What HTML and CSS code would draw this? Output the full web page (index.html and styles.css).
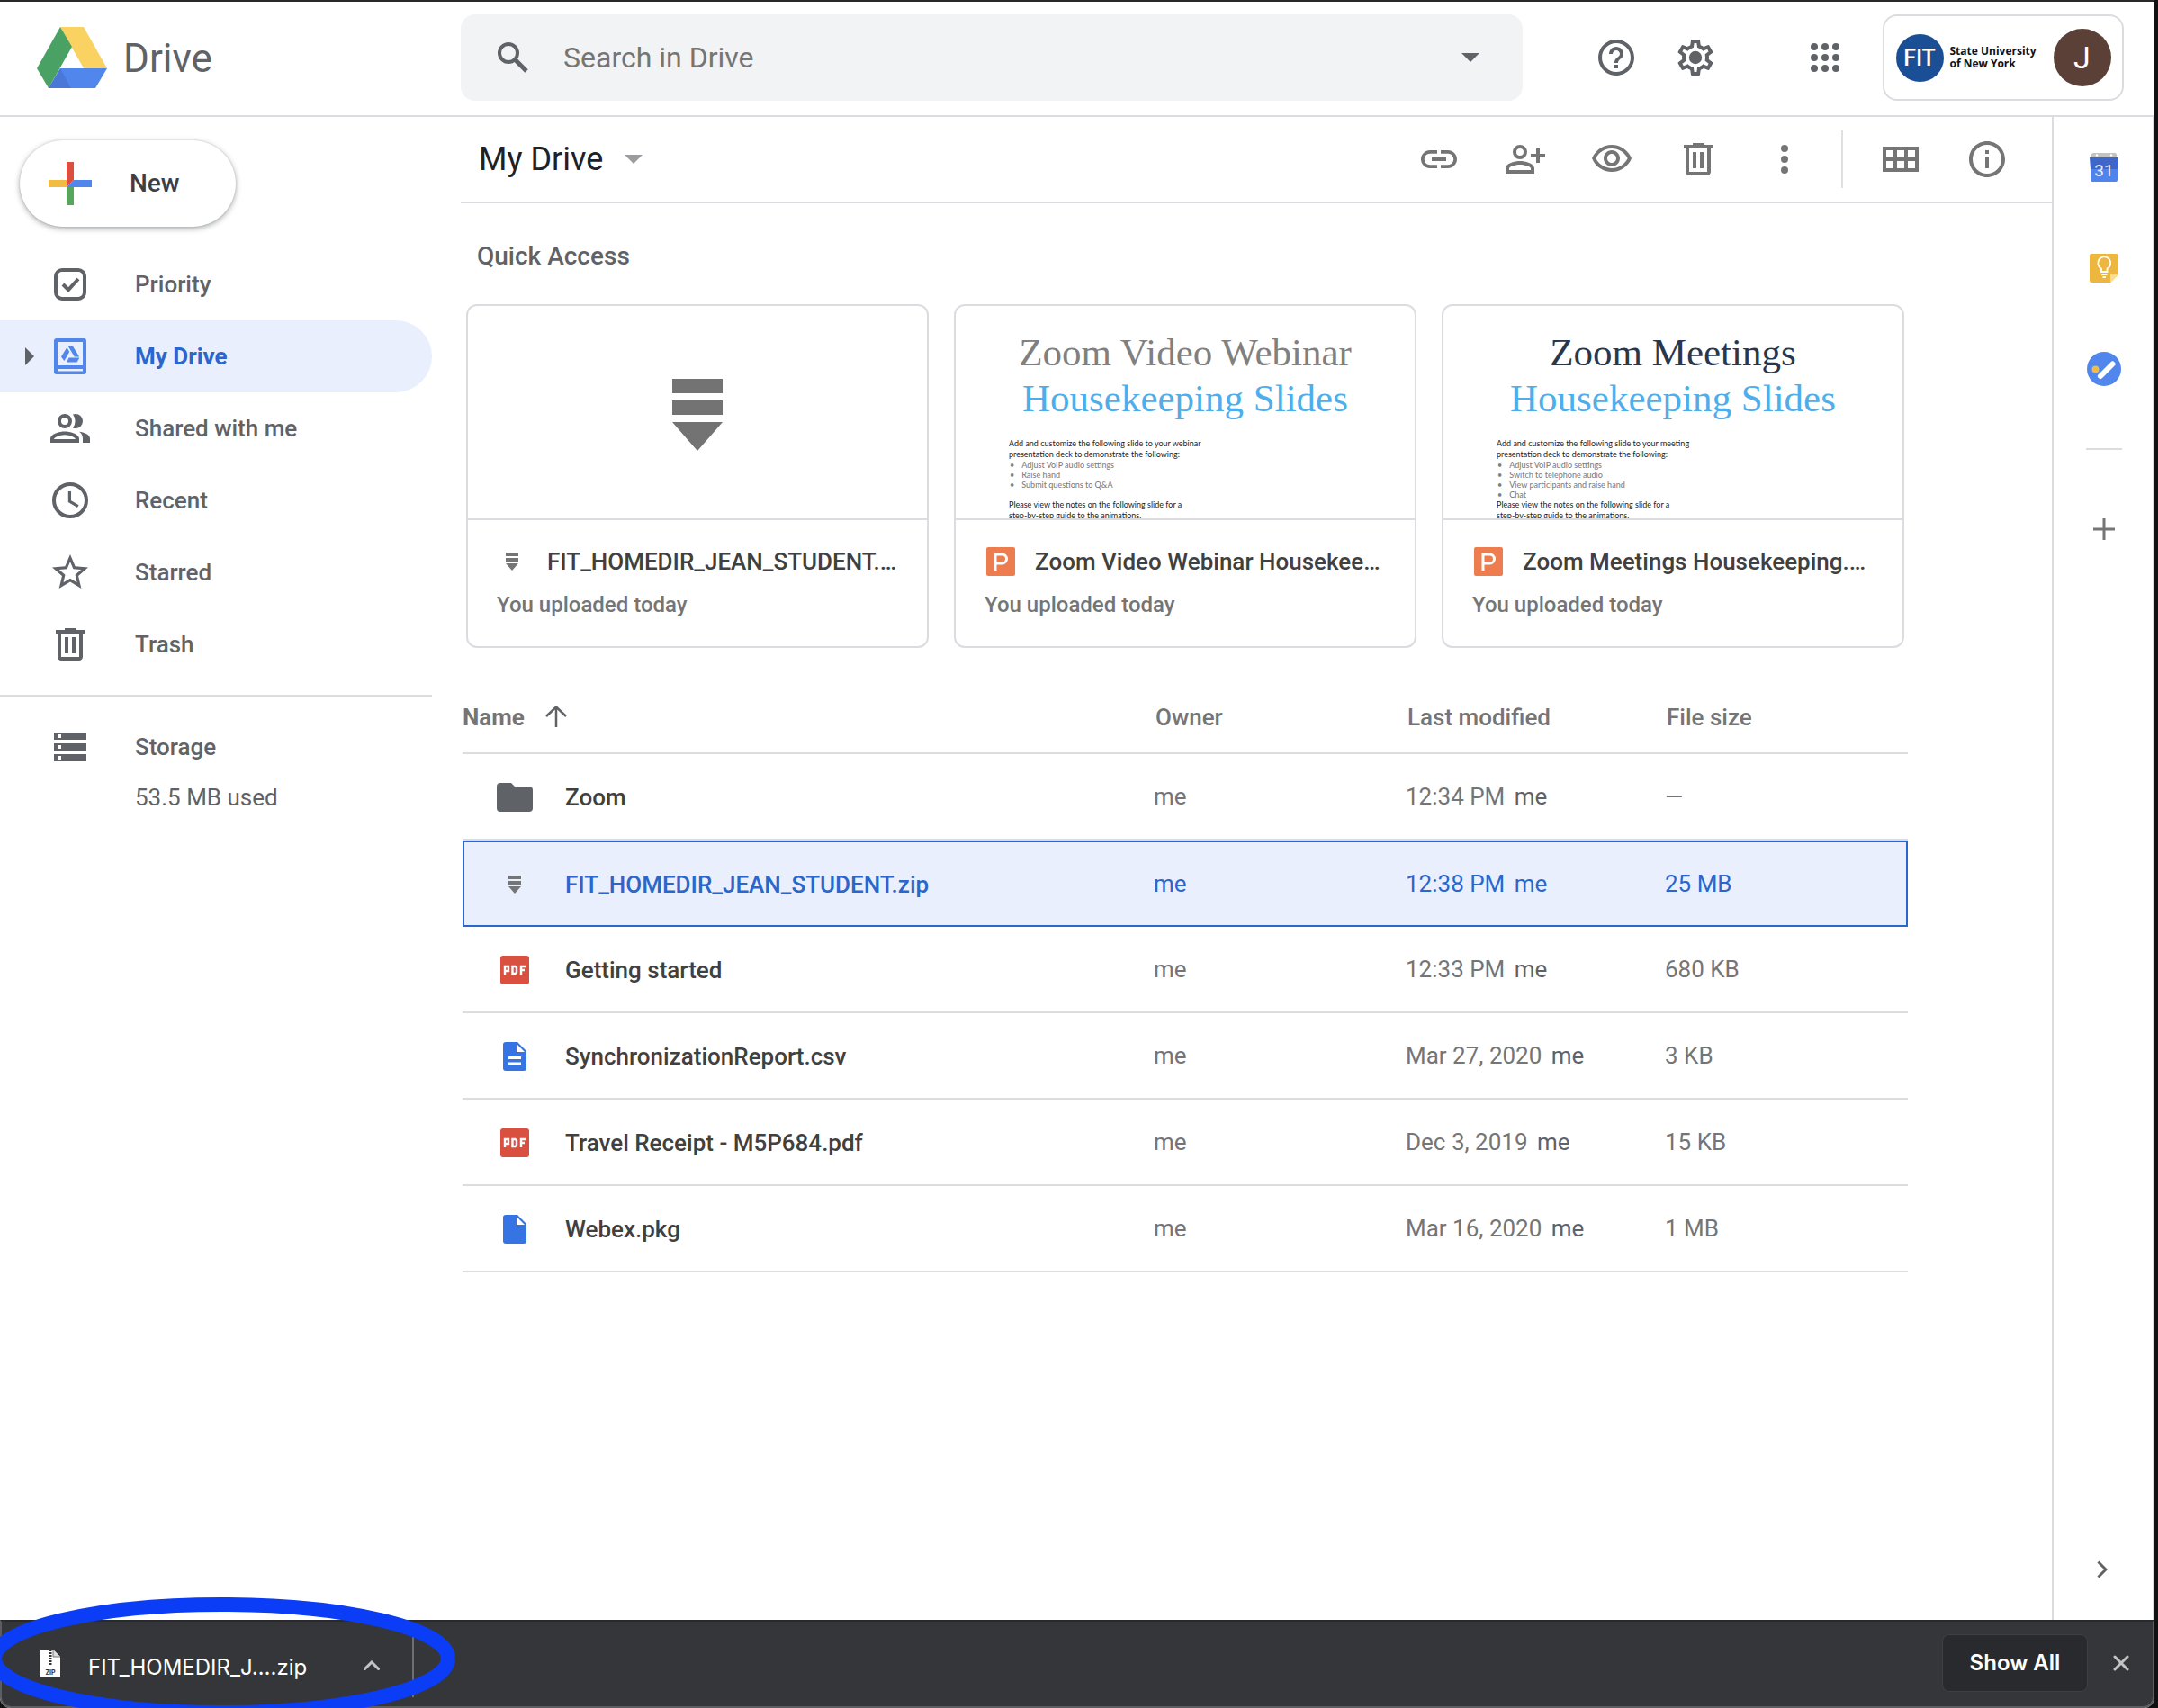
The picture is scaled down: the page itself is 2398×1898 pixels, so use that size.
FILE: index.html
```html
<!DOCTYPE html>
<html lang="en">
<head>
<meta charset="utf-8">
<title>My Drive - Google Drive</title>
<link rel="stylesheet" href="styles.css">
</head>
<body>
<svg class="sprite" aria-hidden="true">
  <symbol id="trash" viewBox="0 0 24 24"><path fill-rule="evenodd" d="M15 4V3H9v1H4v2h1v13c0 1.100.9 2 2 2h10c1.100 0 2-.9 2-2V6h1V4h-5zm2 15H7V6h10v13zM9 8h2v9H9zM13 8h2v9h-2z"/></symbol>
  <symbol id="zip" viewBox="0 0 14 20"><path d="M0 0h14v4H0zM0 6h14v4H0zM0 12h14l-7 8z"/></symbol>
  <symbol id="slides" viewBox="0 0 32 32"><rect width="32" height="32" rx="2" fill="#ed7d4e"/><path d="M10 26V8h7.500a5 5 0 0 1 0 10H10" fill="none" stroke="#fff" stroke-width="3"/></symbol>
  <symbol id="pdf" viewBox="0 0 32 32"><rect width="32" height="32" rx="3" fill="#d94f40"/><path d="M5 21v-9h4v5H5M13.500 12h3l1.500 1.500v5L16.500 20h-3zM23 21v-9h5M23 16h4" fill="none" stroke="#fff" stroke-width="2.400"/></symbol>
  <symbol id="doc" viewBox="0 0 26 32"><path d="M3 0h13l10 10v19a3 3 0 0 1-3 3H3a3 3 0 0 1-3-3V3a3 3 0 0 1 3-3z" fill="#3574e2"/><path d="M15 2v9h9z" fill="#fff"/></symbol>
</svg>
<div class="window">
  <header class="topbar">
    <a class="brand" href="#">
      <svg class="logo" viewBox="0 0 78 68" aria-hidden="true">
        <path d="M26 0h26l26 46H52z" fill="#f9d262"/>
        <path d="M26 0l13 22L13 68 0 46z" fill="#4aa164"/>
        <path d="M26 46h52L65 68H13z" fill="#5186ec"/>
        <path d="M26 46l12 22H13z" fill="#4a78d8"/>
      </svg>
      <span>Drive</span>
    </a>
    <form class="search">
      <svg class="glass" viewBox="0 0 36 36" aria-hidden="true"><circle cx="13" cy="13" r="10" fill="none" stroke="currentColor" stroke-width="4"/><path d="M20 20l13 13" stroke="currentColor" stroke-width="5"/></svg>
      <input type="text" aria-label="Search in Drive" placeholder="Search in Drive">
      <button type="button" aria-label="Search options"><svg class="caret" viewBox="0 0 20 10"><path d="M0 0h20L10 10z"/></svg></button>
    </form>
    <div class="tools">
      <button type="button" aria-label="Support"><svg class="icon" viewBox="0 0 24 24"><path d="M11 18h2v-2h-2v2zm1-16C6.480 2 2 6.480 2 12s4.480 10 10 10 10-4.480 10-10S17.520 2 12 2zm0 18c-4.410 0-8-3.590-8-8s3.590-8 8-8 8 3.590 8 8-3.590 8-8 8zm0-14c-2.210 0-4 1.790-4 4h2c0-1.100.9-2 2-2s2 .9 2 2c0 2-3 1.750-3 5h2c0-2.250 3-2.500 3-5 0-2.210-1.790-4-4-4z"/></svg></button>
      <button type="button" aria-label="Settings"><svg class="icon" viewBox="0 0 24 24"><path d="M19.430 12.980c.04-.32.07-.64.07-.98 0-.34-.03-.66-.07-.98l2.110-1.650c.19-.15.24-.42.12-.64l-2-3.460c-.09-.16-.26-.25-.44-.25-.06 0-.12.01-.17.03l-2.490 1c-.52-.4-1.080-.73-1.690-.98l-.38-2.650C14.460 2.180 14.250 2 14 2h-4c-.25 0-.46.18-.49.42l-.38 2.650c-.61.25-1.170.59-1.690.98l-2.490-1c-.06-.02-.12-.03-.18-.03-.17 0-.34.09-.43.25l-2 3.460c-.13.22-.07.49.12.64l2.110 1.650c-.04.32-.07.65-.07.98 0 .33.03.66.07.98l-2.110 1.650c-.19.15-.24.42-.12.64l2 3.460c.09.16.26.25.44.25.06 0 .12-.01.17-.03l2.490-1c.52.4 1.080.73 1.690.98l.38 2.650c.03.24.24.42.49.42h4c.25 0 .46-.18.49-.42l.38-2.650c.61-.25 1.170-.59 1.690-.98l2.490 1c.06.02.12.03.18.03.17 0 .34-.09.43-.25l2-3.460c.12-.22.07-.49-.12-.64l-2.110-1.650zm-1.980-1.710c.04.31.05.52.05.73 0 .21-.02.43-.05.73l-.14 1.130.89.7 1.080.84-.7 1.210-1.270-.51-1.040-.42-.9.68c-.43.32-.84.56-1.250.73l-1.060.43-.16 1.130-.2 1.350h-1.400l-.19-1.350-.16-1.130-1.060-.43c-.43-.18-.83-.41-1.230-.71l-.91-.7-1.060.43-1.270.51-.7-1.210 1.080-.84.89-.7-.14-1.130c-.03-.31-.05-.54-.05-.74s.02-.43.05-.73l.14-1.130-.89-.7-1.080-.84.7-1.210 1.270.51 1.040.42.9-.68c.43-.32.84-.56 1.250-.73l1.060-.43.16-1.130.2-1.350h1.390l.19 1.350.16 1.130 1.060.43c.43.18.83.41 1.230.71l.91.7 1.060-.43 1.270-.51.7 1.210-1.070.85-.89.7.14 1.130z"/><circle cx="12" cy="12" r="3.600"/></svg></button>
      <button type="button" class="apps" aria-label="Google apps"><svg class="icon" viewBox="0 0 24 24"><circle cx="6" cy="6" r="2"/><circle cx="12" cy="6" r="2"/><circle cx="18" cy="6" r="2"/><circle cx="6" cy="12" r="2"/><circle cx="12" cy="12" r="2"/><circle cx="18" cy="12" r="2"/><circle cx="6" cy="18" r="2"/><circle cx="12" cy="18" r="2"/><circle cx="18" cy="18" r="2"/></svg></button>
    </div>
    <button type="button" class="account" aria-label="Account">
      <span class="fit">FIT</span>
      <span class="school">State University<br>of New York</span>
      <span class="avatar">J</span>
    </button>
  </header>

  <div class="body">
    <aside class="sidebar">
      <button type="button" class="new">
        <svg class="icon" viewBox="0 0 48 48"><path d="M20 0h8v20l-8 8z" fill="#db4f3f"/><path d="M0 20h20v8H0z" fill="#f2bb41"/><path d="M20 28h8v20h-8z" fill="#58a55c"/><path d="M28 20h20v8H20z" fill="#5186ec"/></svg>
        <span>New</span>
      </button>
      <nav>
        <a class="item" href="#"><svg class="icon" viewBox="0 0 24 24"><rect x="4" y="4" width="16" height="16" rx="3.500" fill="none" stroke="currentColor" stroke-width="2"/><path d="M8 12l3 3 5.500-6" fill="none" stroke="currentColor" stroke-width="2"/></svg>Priority</a>
        <a class="item current" href="#"><svg class="expand" viewBox="0 0 10 20" aria-hidden="true"><path d="M0 0l10 10L0 20z"/></svg><svg class="icon" viewBox="0 0 24 24"><path fill="#5186ec" fill-rule="evenodd" d="M4.500 2h15A1.500 1.500 0 0 1 21 3.500v17a1.500 1.500 0 0 1-1.500 1.500h-15A1.500 1.500 0 0 1 3 20.500v-17A1.500 1.500 0 0 1 4.500 2zM5 4v13h14V4zM5 19v1.200h14V19z"/><path fill="#5186ec" d="M10.800 6.200h2.600l3.700 6.100h-2.700zM10.200 7l1.400 2.500-2.900 5L7 12.300zM11.300 12.800h5.900l-1.400 2.400H10z"/></svg>My Drive</a>
        <a class="item" href="#"><svg class="icon" viewBox="0 0 24 24"><path fill-rule="evenodd" d="M9 13.700c-2.700 0-8 1.300-8 4V20h16v-2.300c0-2.700-5.300-4-8-4zM3 18c.2-.9 3-2.400 6-2.400s5.800 1.500 6 2.400zM9 12a4 4 0 1 0 0-8 4 4 0 0 0 0 8zm0-6a2 2 0 1 1 0 4 2 2 0 0 1 0-4zM17 13.900c1.200.8 2 2 2 3.700V20h4v-2.300c0-2.300-3.500-3.500-6-3.800zM15 12a4 4 0 0 0 0-8c-.5 0-1 .1-1.500.3a6 6 0 0 1 0 7.400c.5.2 1 .3 1.500.3z"/></svg>Shared with me</a>
        <a class="item" href="#"><svg class="icon" viewBox="0 0 24 24"><circle cx="12" cy="12" r="9" fill="none" stroke="currentColor" stroke-width="2"/><path d="M11.700 7v5.500l4.700 2.800" fill="none" stroke="currentColor" stroke-width="1.600"/></svg>Recent</a>
        <a class="item" href="#"><svg class="icon" viewBox="0 0 24 24"><path d="M22 9.240l-7.190-.62L12 2 9.190 8.630 2 9.240l5.460 4.730L5.820 21 12 17.270 18.180 21l-1.630-7.030L22 9.240zM12 15.400l-3.760 2.270 1-4.280-3.320-2.880 4.380-.38L12 6.100l1.710 4.040 4.380.38-3.320 2.880 1 4.280L12 15.400z"/></svg>Starred</a>
        <a class="item" href="#"><svg class="icon"><use href="#trash"/></svg>Trash</a>
      </nav>
      <div class="storage">
        <a class="item" href="#"><svg class="icon" viewBox="0 0 24 24"><path fill-rule="evenodd" d="M3 4h18v4H3zM3 10h18v4H3zM3 16h18v4H3zM5 5v2h2V5zM5 11v2h2v-2zM5 17v2h2v-2z"/></svg>Storage</a>
        <p>53.5 MB used</p>
      </div>
    </aside>

    <main class="main">
      <div class="toolbar">
        <button type="button" class="crumb">My Drive <svg class="caret" viewBox="0 0 20 10"><path d="M0 0h20L10 10z"/></svg></button>
        <div class="actions">
          <button type="button" aria-label="Get link"><svg class="icon" viewBox="0 0 24 24"><path d="M3.900 12c0-1.710 1.390-3.100 3.100-3.100h4V7H7c-2.760 0-5 2.240-5 5s2.240 5 5 5h4v-1.900H7c-1.710 0-3.100-1.390-3.100-3.100zM8 13h8v-2H8v2zm9-6h-4v1.900h4c1.710 0 3.100 1.390 3.100 3.100s-1.390 3.100-3.100 3.100h-4V17h4c2.760 0 5-2.240 5-5s-2.240-5-5-5z"/></svg></button>
          <button type="button" aria-label="Share"><svg class="icon" viewBox="0 0 24 24"><path fill-rule="evenodd" d="M9 4a4 4 0 1 0 0 8 4 4 0 0 0 0-8zm0 2a2 2 0 1 1 0 4 2 2 0 0 1 0-4zM9 13c-2.700 0-8 1.300-8 4v3h16v-3c0-2.700-5.300-4-8-4zm6 5H3v-1c0-.7 3-2 6-2s6 1.300 6 2zM18 6h2v3h3v2h-3v3h-2v-3h-3V9h3z"/></svg></button>
          <button type="button" aria-label="Preview"><svg class="icon" viewBox="0 0 24 24"><path d="M12 6c3.790 0 7.170 2.130 8.820 5.500C19.170 14.870 15.790 17 12 17s-7.170-2.130-8.820-5.500C4.830 8.130 8.210 6 12 6m0-2C7 4 2.730 7.110 1 11.500 2.730 15.890 7 19 12 19s9.270-3.110 11-7.500C21.270 7.110 17 4 12 4zm0 5c1.380 0 2.500 1.120 2.500 2.500S13.380 14 12 14s-2.500-1.120-2.500-2.500S10.620 9 12 9m0-2c-2.480 0-4.500 2.020-4.500 4.500S9.520 16 12 16s4.500-2.020 4.500-4.500S14.480 7 12 7z"/></svg></button>
          <button type="button" aria-label="Remove"><svg class="icon"><use href="#trash"/></svg></button>
          <button type="button" aria-label="More actions"><svg class="icon" viewBox="0 0 24 24"><circle cx="12" cy="6" r="2"/><circle cx="12" cy="12" r="2"/><circle cx="12" cy="18" r="2"/></svg></button>
          <span class="divider"></span>
          <button type="button" aria-label="Grid view"><svg class="icon" viewBox="0 0 24 24"><path fill-rule="evenodd" d="M2 5h20v14H2zM4 7v4h4V7zM10 7v4h4V7zM16 7v4h4V7zM4 13v4h4v-4zM10 13v4h4v-4zM16 13v4h4v-4z"/></svg></button>
          <button type="button" aria-label="View details"><svg class="icon" viewBox="0 0 24 24"><path d="M11 7h2v2h-2zm0 4h2v6h-2zm1-9C6.480 2 2 6.480 2 12s4.480 10 10 10 10-4.480 10-10S17.520 2 12 2zm0 18c-4.410 0-8-3.590-8-8s3.590-8 8-8 8 3.590 8 8-3.590 8-8 8z"/></svg></button>
        </div>
      </div>

      <h2>Quick Access</h2>
      <section class="cards">
        <article class="card">
          <div class="preview archive"><svg viewBox="0 0 56 80"><path d="M0 0h56v16H0zM0 24h56v16H0zM0 48h56L28 80z"/></svg></div>
          <div class="meta">
            <h3><span class="kind"><svg class="zip"><use href="#zip"/></svg></span>FIT_HOMEDIR_JEAN_STUDENT.…</h3>
            <p>You uploaded today</p>
          </div>
        </article>
        <article class="card">
          <div class="preview">
            <div class="slide-title gray">Zoom Video Webinar</div>
            <div class="slide-title sky">Housekeeping Slides</div>
            <div class="slide-notes">
              <p>Add and customize the following slide to your webinar<br>presentation deck to demonstrate the following:</p>
              <ul><li>Adjust VoIP audio settings</li><li>Raise hand</li><li>Submit questions to Q&amp;A</li><li class="blank"></li></ul>
              <p>Please view the notes on the following slide for a<br>step-by-step guide to the animations.</p>
            </div>
          </div>
          <div class="meta">
            <h3><span class="kind"><svg class="file"><use href="#slides"/></svg></span>Zoom Video Webinar Housekee…</h3>
            <p>You uploaded today</p>
          </div>
        </article>
        <article class="card">
          <div class="preview">
            <div class="slide-title navy">Zoom Meetings</div>
            <div class="slide-title sky">Housekeeping Slides</div>
            <div class="slide-notes">
              <p>Add and customize the following slide to your meeting<br>presentation deck to demonstrate the following:</p>
              <ul><li>Adjust VoIP audio settings</li><li>Switch to telephone audio</li><li>View participants and raise hand</li><li>Chat</li></ul>
              <p>Please view the notes on the following slide for a<br>step-by-step guide to the animations.</p>
            </div>
          </div>
          <div class="meta">
            <h3><span class="kind"><svg class="file"><use href="#slides"/></svg></span>Zoom Meetings Housekeeping.…</h3>
            <p>You uploaded today</p>
          </div>
        </article>
      </section>

      <table class="files">
        <colgroup><col><col class="c-owner"><col class="c-date"><col class="c-size"></colgroup>
        <thead>
          <tr><th class="sorted">Name <svg class="arrow" viewBox="0 0 24 24"><path d="M12 24V2M1 12L12 1.500 23 12" fill="none" stroke="currentColor" stroke-width="2.500"/></svg></th><th>Owner</th><th>Last modified</th><th>File size</th></tr>
        </thead>
        <tbody>
          <tr><td class="name"><span class="kind"><svg class="folder" viewBox="0 0 40 32"><path d="M4 0h12l4 4h16a4 4 0 0 1 4 4v20a4 4 0 0 1-4 4H4a4 4 0 0 1-4-4V4a4 4 0 0 1 4-4z"/></svg></span>Zoom</td><td>me</td><td>12:34 PM <span class="by">me</span></td><td>—</td></tr>
          <tr class="selected"><td class="name"><span class="kind"><svg class="zip"><use href="#zip"/></svg></span>FIT_HOMEDIR_JEAN_STUDENT.zip</td><td>me</td><td>12:38 PM <span class="by">me</span></td><td>25 MB</td></tr>
          <tr><td class="name"><span class="kind"><svg class="file"><use href="#pdf"/></svg></span>Getting started</td><td>me</td><td>12:33 PM <span class="by">me</span></td><td>680 KB</td></tr>
          <tr><td class="name"><span class="kind"><svg class="file" viewBox="0 0 26 32"><use href="#doc"/><path d="M6 17.500h14M6 24h14" stroke="#fff" stroke-width="3"/></svg></span>SynchronizationReport.csv</td><td>me</td><td>Mar 27, 2020 <span class="by">me</span></td><td>3 KB</td></tr>
          <tr><td class="name"><span class="kind"><svg class="file"><use href="#pdf"/></svg></span>Travel Receipt - M5P684.pdf</td><td>me</td><td>Dec 3, 2019 <span class="by">me</span></td><td>15 KB</td></tr>
          <tr><td class="name"><span class="kind"><svg class="file"><use href="#doc"/></svg></span>Webex.pkg</td><td>me</td><td>Mar 16, 2020 <span class="by">me</span></td><td>1 MB</td></tr>
        </tbody>
      </table>
    </main>

    <aside class="panel">
      <button type="button" aria-label="Calendar"><svg class="file" viewBox="0 0 32 32"><path d="M2 2a2 2 0 0 1 2-2h24a2 2 0 0 1 2 2v4H2z" fill="#c3c3c3"/><circle cx="8" cy="2.500" r="1.200" fill="#fff"/><circle cx="24" cy="2.500" r="1.200" fill="#fff"/><path d="M0 5h32l-1 13H1z" fill="#3f66cb"/><path d="M1 18h30v12a2 2 0 0 1-2 2H3a2 2 0 0 1-2-2z" fill="#5084ec"/><text x="16" y="26" text-anchor="middle" class="day">31</text></svg></button>
      <button type="button" aria-label="Keep"><svg class="file" viewBox="0 0 32 32"><path d="M2 0h28a2 2 0 0 1 2 2v21l-9 9H2a2 2 0 0 1-2-2V2a2 2 0 0 1 2-2z" fill="#ecb63f"/><path d="M23 32v-9h9z" fill="#f9dd95"/><path d="M13 20v-3.500a7 7 0 1 1 6.500 0V20zM13 23h6.500M14.500 26h3.500" fill="none" stroke="#fff" stroke-width="1.800"/></svg></button>
      <button type="button" aria-label="Tasks"><svg class="tasks" viewBox="0 0 38 38"><circle cx="19" cy="19" r="19" fill="#5186ec"/><circle cx="9.500" cy="19.500" r="4" fill="#f2bb41"/><path d="M15 27l13.500-13.500" stroke="#fff" stroke-width="6" stroke-linecap="round"/></svg></button>
      <hr>
      <button type="button" aria-label="Get add-ons"><svg class="plus" viewBox="0 0 24 24"><path d="M12 0v24M0 12h24" stroke="#757575" stroke-width="3"/></svg></button>
      <button type="button" class="hide" aria-label="Hide side panel"><svg class="chevron" viewBox="0 0 12 20"><path d="M1.500 1.500L10 10l-8.500 8.500" fill="none" stroke="#5f6368" stroke-width="3"/></svg></button>
    </aside>
  </div>

  <footer class="downloads">
    <button type="button" class="download">
      <svg class="zipfile" viewBox="0 0 22 30" aria-hidden="true"><path d="M0 0h14l8 8v22H0z" fill="#fff"/><path d="M14 0v8h8" fill="#ddd" stroke="#777" stroke-width="1"/><path d="M11 0v17" stroke="#333" stroke-width="3" stroke-dasharray="2 1"/><text x="11" y="28" text-anchor="middle" class="ext">ZIP</text></svg>
      <span class="filename">FIT_HOMEDIR_J….zip</span>
    </button>
    <button type="button" class="menu" aria-label="Download options"><svg viewBox="0 0 18 11"><path d="M1.500 9.500L9 2l7.500 7.500" fill="none" stroke="#c4c4c6" stroke-width="3" stroke-linecap="round"/></svg></button>
    <span class="split"></span>
    <button type="button" class="show-all">Show All</button>
    <button type="button" class="close" aria-label="Close"><svg viewBox="0 0 18 18"><path d="M2 2l14 14M16 2L2 16" stroke="#c4c4c6" stroke-width="3" stroke-linecap="round"/></svg></button>
    <svg class="highlight" viewBox="0 0 520 136" aria-hidden="true"><ellipse cx="260" cy="68" rx="252" ry="60" fill="none" stroke="#0b3df6" stroke-width="16"/></svg>
  </footer>
</div>
</body>
</html>
```

FILE: styles.css
```css
* { box-sizing: border-box; }
body {
  margin: 0;
  background: #111;
  font-family: Roboto, sans-serif;
  font-size: 26px;
  line-height: 32px;
  color: #757575;
}
h2, h3, p, ul { margin: 0; padding: 0; font-weight: 500; }
a { color: inherit; text-decoration: none; }
button { font: inherit; color: inherit; background: none; border: 0; padding: 0; display: flex; align-items: center; justify-content: center; }
svg { display: block; fill: currentColor; flex: none; }
.sprite { display: none; }
.icon { width: 48px; height: 48px; }
.caret { width: 20px; height: 10px; }
.zip { width: 14px; height: 20px; color: #757575; }
.file { width: 32px; height: 32px; }
.folder { width: 40px; height: 32px; color: #5f6368; }

.window {
  display: flex;
  flex-direction: column;
  min-height: 100vh;
  margin-right: 4px;
  background: #fff;
  border-top: 2px solid #29282b;
  border-radius: 0 0 12px 12px;
}

/* Top bar */
.topbar {
  display: flex;
  align-items: center;
  height: 128px;
  padding-right: 34px;
  padding-bottom: 2px;
  border-bottom: 2px solid #dadce0;
  color: #5f6368;
}
.brand { display: flex; align-items: center; gap: 18px; width: 512px; padding-left: 41px; font-size: 44px; line-height: 48px; }
.brand span { padding-top: 2px; }
.logo { width: 78px; height: 68px; }
.search { display: flex; align-items: center; flex: 1; height: 96px; padding: 0 48px 0 40px; background: #f1f3f4; border-radius: 16px; }
.glass { width: 36px; height: 36px; }
.search input { flex: 1; min-width: 0; margin: 0; padding: 0 0 0 38px; border: 0; background: none; outline: 0; font: 32px/40px Roboto, sans-serif; color: #757575; }
.search input::placeholder { color: #757575; opacity: 1; }
.tools { display: flex; gap: 40px; padding: 0 40px 0 80px; }
.tools .apps { margin-left: 56px; }
.account { gap: 7px; width: 268px; height: 96px; border: 2px solid #dadce0; border-radius: 16px; }
.fit { width: 53px; height: 53px; border-radius: 50%; background: #1b4f95; color: #fff; font: 500 25px/53px Roboto, sans-serif; text-align: center; }
.school { width: 96px; font: 700 12px/14px "Open Sans", sans-serif; color: #111; text-align: left; white-space: nowrap; }
.avatar { width: 64px; height: 64px; margin-left: 12px; border-radius: 50%; background: #5a4037; color: #fff; font-size: 34px; line-height: 64px; }

.body { display: flex; flex: 1; }

/* Sidebar */
.sidebar { width: 480px; margin-right: 32px; padding-top: 26px; color: #5f6368; }
.new { justify-content: flex-start; gap: 42px; width: 240px; height: 96px; margin-left: 22px; padding-left: 32px; border-radius: 48px; background: #fff; box-shadow: 0 2px 6px rgba(60, 64, 67, .45), 0 0 2px rgba(60, 64, 67, .2); color: #3c4043; font-size: 28px; font-weight: 500; }
nav { margin-top: 24px; padding-bottom: 16px; border-bottom: 2px solid #dadce0; }
.item { display: flex; align-items: center; gap: 48px; height: 80px; padding-left: 54px; font-weight: 500; position: relative; }
.current { background: #e9effd; color: #2b66cc; font-weight: 700; border-radius: 0 40px 40px 0; }
.expand { position: absolute; left: 28px; width: 10px; height: 20px; color: #5f6368; }
.storage { padding-top: 16px; }
.storage p { padding-left: 150px; font-weight: 400; }

/* Main column */
.main { flex: 1; min-width: 0; }
.toolbar { display: flex; justify-content: space-between; align-items: center; height: 96px; padding: 0 48px 0 20px; border-bottom: 2px solid #dadce0; }
.crumb { gap: 24px; font-size: 36px; line-height: 40px; color: #202124; }
.crumb .caret { color: #9b9c9f; }
.actions { display: flex; gap: 48px; }
.divider { width: 2px; height: 64px; margin: -8px -8px -8px -9px; background: #e0e0e0; }
h2 { padding: 43px 0 37px 18px; font-size: 28px; color: #5f6368; }
.cards { display: grid; grid-template-columns: repeat(3, 1fr); gap: 28px; margin: 0 164px 0 6px; }
.card { min-width: 0; border: 2px solid #dadce0; border-radius: 12px; overflow: hidden; }
.preview { height: 238px; padding-top: 26px; border-bottom: 2px solid #dadce0; overflow: hidden; }
.archive { display: flex; justify-content: center; padding-top: 81px; color: #737373; }
.archive svg { width: 56px; height: 80px; }
.slide-title { font: 43px/51px "Liberation Serif", serif; text-align: center; }
.gray { color: #808080; }
.navy { color: #28374d; }
.sky { color: #4faeea; }
.slide-notes { padding: 19px 0 0 59px; font: 9px/12px Lato, sans-serif; color: #222; white-space: nowrap; }
.slide-notes p { font-weight: 400; }
.slide-notes ul { line-height: 11px; color: #808080; list-style: none; }
.slide-notes li { display: flex; gap: 8px; height: 11px; padding-left: 1px; }
.slide-notes li::before { content: "•"; }
.slide-notes .blank::before { content: none; }
.meta { height: 140px; padding: 30px 30px 0 32px; white-space: nowrap; }
.meta h3 { display: flex; font-size: 26px; color: #404040; }
.meta p { padding-top: 16px; font-size: 24px; }
.meta .kind { width: 56px; }
.meta .kind .zip { margin-left: 10px; }
.meta .kind .file { margin-left: 2px; }
.kind { display: flex; align-items: center; flex: none; }

/* File list */
.files { width: calc(100% - 162px); margin: 38px 0 0 2px; table-layout: fixed; border-spacing: 0; border-collapse: separate; text-align: left; }
.c-owner { width: 280px; }
.c-date { width: 288px; }
.c-size { width: 270px; }
th { height: 80px; padding: 0 0 0 2px; border-bottom: 2px solid #dadce0; font-weight: 500; }
.sorted { font-weight: 700; padding-left: 0; }
.arrow { display: inline-block; width: 24px; height: 24px; margin-left: 17px; color: #5f6368; vertical-align: -2px; }
td { height: 96px; padding: 0; border-bottom: 2px solid #dadce0; }
.by { margin-left: 4px; color: #5f6368; }
.name { padding-top: 2px; font-weight: 500; color: #404040; }
.name .kind { display: inline-flex; justify-content: center; width: 114px; height: 32px; padding-left: 1px; vertical-align: bottom; }
.selected td { background: #e9effd; color: #2b66cc; border-top: 2px solid #2b66cc; border-bottom-color: #2b66cc; }
.selected td:first-child { border-left: 2px solid #2b66cc; }
.selected td:last-child { border-right: 2px solid #2b66cc; }
.selected .by { color: inherit; }
.selected .kind { margin-left: -2px; }

/* Side panel */
.panel { display: flex; flex-direction: column; align-items: center; width: 114px; padding: 32px 0 32px 2px; border-left: 2px solid #dadce0; border-right: 2px solid #dadce0; }
.panel button { height: 48px; margin-bottom: 64px; }
.day { font: 19px Roboto, sans-serif; fill: #e8ecf8; }
.tasks { width: 38px; height: 38px; }
hr { width: 40px; height: 2px; margin: 0 0 64px; border: 0; background: #dadce0; }
.plus { width: 24px; height: 24px; }
.panel .hide { margin: auto 4px 0 0; }
.chevron { width: 12px; height: 20px; }

/* Download shelf */
.downloads { position: relative; display: flex; align-items: center; height: 98px; padding: 0 26px 2px 0; background: #35363a; border: 2px solid #5c5d60; border-top-color: #28292c; border-radius: 0 0 12px 12px; color: #fff; font: 24px/32px Inter, sans-serif; }
.download { gap: 31px; padding-left: 43px; }
.filename { padding-top: 10px; }
.zipfile { width: 22px; height: 30px; }
.ext { font: 700 7px Inter, sans-serif; fill: #333; }
.menu { margin-left: 63px; padding-top: 4px; }
.menu svg { width: 18px; height: 11px; }
.split { width: 2px; height: 68px; margin: 8px 0 0 36px; background: #6e6f73; }
.show-all { width: 162px; height: 64px; margin-left: auto; background: #292a2d; border: 1px solid #3f4044; border-radius: 8px; font-weight: 600; }
.close { margin-left: 28px; }
.close svg { width: 18px; height: 18px; }
.highlight { position: absolute; left: -16px; top: -27px; width: 520px; height: 136px; }
```
